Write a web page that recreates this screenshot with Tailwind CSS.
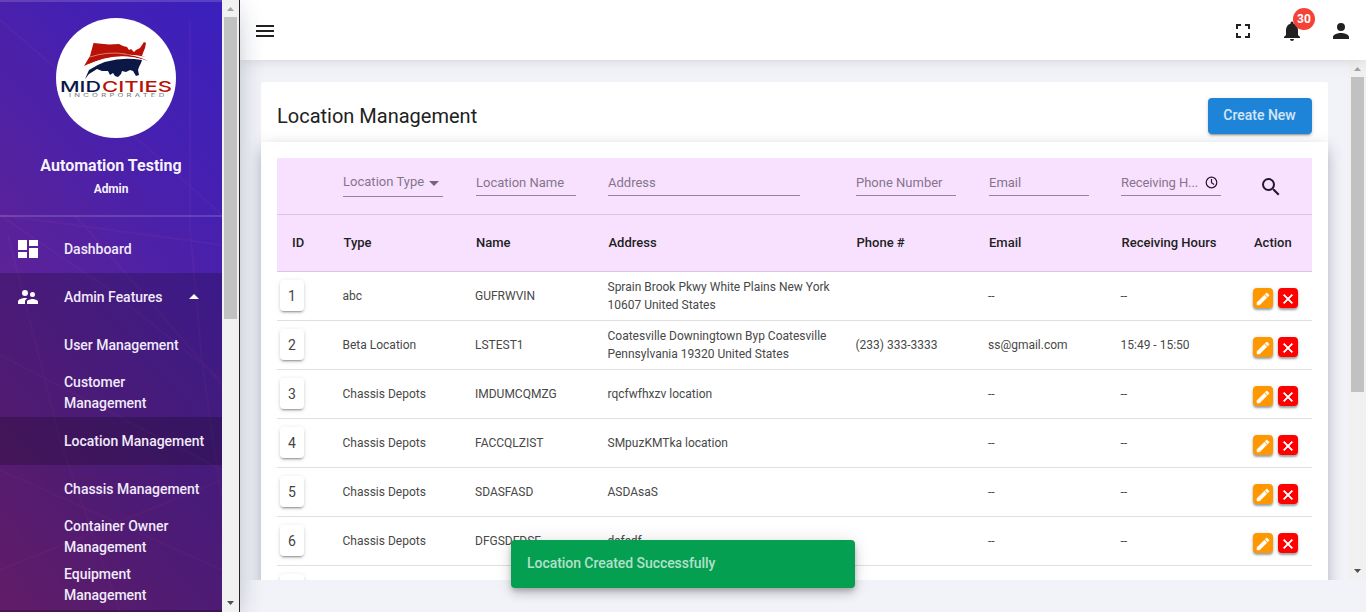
<!DOCTYPE html>
<html lang="en">
<head>
<meta charset="utf-8">
<title>Location Management</title>
<script src="https://cdn.jsdelivr.net/npm/@tailwindcss/browser@4"></script>
</head>
<body class="w-[1366px] h-[612px] overflow-hidden font-['Roboto',sans-serif] bg-[#f2f3f8] text-[#212121]">
<svg class="hidden">
  <symbol id="pencil" viewBox="0 0 24 24"><path stroke="#fff" stroke-width=".8" d="M3 17.25V21h3.750L17.810 9.940l-3.750-3.750L3 17.250zM20.710 7.040a1 1 0 0 0 0-1.410l-2.340-2.340a1 1 0 0 0-1.410 0l-1.830 1.830 3.750 3.750 1.830-1.830z"/></symbol>
  <symbol id="close" viewBox="0 0 24 24"><path stroke="#fff" stroke-width="1" d="M19 6.410 17.590 5 12 10.590 6.410 5 5 6.410 10.590 12 5 17.590 6.410 19 12 13.410 17.590 19 19 17.590 13.410 12z"/></symbol>
</svg>
<div class="flex h-full">
  <aside class="relative z-20 flex w-[240px] shrink-0 shadow-[0_10px_30px_-12px_rgba(0,0,0,.3),0_4px_25px_0_rgba(40,60,120,.12)]">
    <div class="relative w-[222px] h-full overflow-hidden bg-[linear-gradient(50deg,#7b2482_0%,#65228f_25%,#54229f_52%,#4620b0_75%,#3a20bd_100%)] text-[#f0eafa]">
      <svg class="absolute inset-0" width="222" height="612" fill="none" stroke="#d060b0" stroke-opacity=".07" stroke-width="2"><path d="M0 215 222 245M0 20 150 150 222 215M8 235 60 440 120 612M190 20V230L203 370 222 500M0 355 222 470M75 215 222 385M0 470 222 570M0 570 222 480M0 215 110 290 222 380"/></svg>
      <div class="relative flex flex-col h-[217px] items-center border-y-2 border-white/15">
        <div class="mt-4 ml-[10px] size-[120px] shrink-0 rounded-full bg-white overflow-hidden">
          <svg width="120" height="120" viewBox="0 0 120 120">
            <path fill="#b91007" d="M37.500 25 53 26.500 63 26 67 28 71 29 73 32 75 31 78 34 80 32 84 30 86 27 88 24 90 25 89 30 87 35 86 38 90 39Q60 31 28 48L34 38z"/>
            <path fill="none" stroke="#e5a79f" stroke-width=".7" d="M34 39Q52 33 70 36"/>
            <path fill="#b91007" d="M38 40Q70 31 92 43Q64 33 32 46z"/>
            <path fill="#fff" d="M29 49Q58 31 92 43Q60 36 29 56z"/>
            <path fill="#0b1745" d="M29 61 33 52Q55 37 86 42L85 45 83 49 82 52 83 57 80 58 77 53 74 52 70 54 66 53 65 56 62 59 59 58 57 55 54 57 52 53 46 53 41 51 33 56z"/>
            <text x="4" y="74" font-family="Inter,sans-serif" font-size="15" font-weight="500" textLength="41" lengthAdjust="spacingAndGlyphs" fill="#0b1745">MID</text>
            <text x="46" y="74" font-family="Inter,sans-serif" font-size="15" font-weight="500" textLength="70" lengthAdjust="spacingAndGlyphs" fill="#b91007">CITIES</text>
            <text transform="translate(13 79) scale(1.7 1)" y="0" font-family="Inter,sans-serif" font-size="4.500" textLength="56" fill="#777">INCORPORATED</text>
          </svg>
        </div>
        <div class="mt-[16px] text-[16px] leading-[24px] font-bold text-white/95">Automation Testing</div>
        <div class="mt-[3px] text-[12px] leading-[16px] font-bold tracking-[-.1px] text-white/95">Admin</div>
      </div>
      <nav class="relative text-[14px] leading-[21px] font-medium tracking-[-.02px]">
        <div class="mt-2 flex h-12 items-center pl-4">
          <svg class="w-6 shrink-0 h-6 fill-white" viewBox="0 0 24 24"><path d="M2 13h9V3H2zm0 8h9v-6H2zm11 0h9V11h-9zm0-18v6h9V3z"/></svg>
          <span class="ml-6">Dashboard</span>
        </div>
        <div class="h-[337px] bg-black/20 pb-px">
          <div class="flex h-12 items-center pl-4">
            <svg class="w-6 shrink-0 h-6 fill-white" viewBox="0 0 24 24"><path d="M16.500 12A2.500 2.500 0 1 0 14 9.500a2.490 2.490 0 0 0 2.500 2.500zM9 11a3 3 0 1 0-3-3 2.990 2.990 0 0 0 3 3zm7.500 3c-1.830 0-5.500.92-5.500 2.750V19h11v-2.250c0-1.830-3.670-2.750-5.500-2.750zM9 13c-2.330 0-7 1.170-7 3.500V19h7v-2.250c0-.85.33-2.340 2.370-3.470C10.500 13.100 9.660 13 9 13z"/></svg>
            <span class="ml-6 w-[118px]">Admin Features</span>
            <svg class="size-6 fill-white" viewBox="0 0 24 24"><path d="m7 14 5-5 5 5z"/></svg>
          </div>
          <div class="flex h-12 items-center pl-16">User Management</div>
          <div class="flex h-12 items-center pl-16">Customer<br>Management</div>
          <div class="flex h-12 items-center bg-black/20 pl-16">Location Management</div>
          <div class="flex h-12 items-center pl-16">Chassis Management</div>
          <div class="flex h-12 items-center pl-16">Container Owner<br>Management</div>
          <div class="flex h-12 items-center pl-16">Equipment<br>Management</div>
        </div>
        <div class="h-2 bg-black/40"></div>
      </nav>
    </div>
    <div class="flex w-[17px] flex-col items-center bg-[#f1f1f1]">
      <svg class="h-[17px] w-[17px] shrink-0" viewBox="0 0 17 17"><path fill="#a3a3a3" d="M5 11h7L8.500 7z"/></svg>
      <div class="h-[302px] w-[13px] bg-[#c1c1c1]"></div>
      <svg class="mt-auto h-[17px] w-[17px]" viewBox="0 0 17 17"><path fill="#505050" d="M5 6h7l-3.500 4z"/></svg>
    </div>
    <div class="w-px bg-[#2a211f]"></div>
  </aside>
  <main class="flex min-w-0 flex-1 flex-col">
    <header class="relative z-10 flex h-[60px] shrink-0 items-center bg-white pl-[13px] shadow-[0_3px_20px_rgba(0,0,0,.06),0_2px_8px_rgba(0,0,0,.05)]">
      <svg class="mt-[2px] size-6" viewBox="0 0 24 24"><path fill="#212121" d="M3 18h18v-2H3zm0-5h18v-2H3zm0-7v2h18V6z"/></svg>
      <svg class="mt-[2px] ml-auto size-6" viewBox="0 0 24 24"><path fill="#212121" d="M7 14H5v5h5v-2H7zm-2-4h2V7h3V5H5zm12 7h-3v2h5v-5h-2zM14 5v2h3v3h2V5z"/></svg>
      <div class="relative ml-[25px] mt-[2px] size-6">
        <svg class="size-6" viewBox="0 0 24 24"><path fill="#212121" d="M12 22c1.100 0 2-.9 2-2h-4a2 2 0 0 0 2 2zm6-6v-5c0-3.070-1.640-5.640-4.500-6.320V4a1.500 1.500 0 0 0-3 0v.68C7.630 5.360 6 7.920 6 11v5l-2 2v1h16v-1z"/></svg>
        <div class="absolute -top-[11px] left-[13px] flex size-[22px] items-center justify-center rounded-full bg-[#f44336] text-[12px] font-bold leading-none text-white">30</div>
      </div>
      <svg class="mt-[2px] mr-[13px] ml-[25px] size-6" viewBox="0 0 24 24"><path fill="#212121" d="M12 12a4 4 0 1 0-4-4 4 4 0 0 0 4 4zm0 2c-2.670 0-8 1.340-8 4v2h16v-2c0-2.660-5.330-4-8-4z"/></svg>
    </header>
    <div class="flex h-[520px] overflow-hidden">
      <div class="flex-1 overflow-hidden pl-[21px] pt-[22px]">
        <section class="h-[700px] w-[1067px] rounded-t-[2px] bg-white">
          <div class="flex h-[60px] items-start justify-between pt-4 pr-4 pl-4">
            <h1 class="text-[20px] leading-9">Location Management</h1>
            <button class="h-9 w-[104px] rounded bg-[#1e84d8] pr-px pb-px text-[14px] font-medium text-white/80 shadow-[0_3px_1px_-2px_rgba(0,0,0,.2),0_2px_2px_rgba(0,0,0,.14),0_1px_5px_rgba(0,0,0,.12)]">Create New</button>
          </div>
          <div class="h-[640px] bg-white px-4 pt-4 shadow-[0_5px_15px_-2px_rgba(50,60,85,.45)]">
            <div class="bg-[#f8e1ff]">
              <div class="grid h-[57px] grid-cols-[66px_132.500px_132.500px_248px_132.500px_132.500px_132.500px_1fr] border-b border-[#dbc6e1] text-[13px] leading-[18px] text-[#85758a]">
                <div></div>
                <div><div class="flex h-[39px] w-[100px] items-end border-b border-[#95839a] pb-[5px] tracking-[.02px]">Location Type<svg class="ml-[5px] mb-[5px] h-[5px] w-[10px]" viewBox="0 0 10 5"><path fill="#756579" d="M0 0h10L5 5z"/></svg></div></div>
                <div><div class="ml-[.5px] flex h-[38px] w-[100px] items-end border-b border-[#95839a] pb-[3px]">Location Name</div></div>
                <div><div class="flex h-[38px] w-[192px] items-end border-b border-[#95839a] pb-[3px]">Address</div></div>
                <div><div class="flex h-[38px] w-[100px] items-end border-b border-[#95839a] pb-[3px]">Phone Number</div></div>
                <div><div class="ml-[.5px] flex h-[38px] w-[100px] items-end border-b border-[#95839a] pb-[3px]">Email</div></div>
                <div><div class="flex h-[38px] w-[100px] items-end border-b border-[#95839a] pb-[3px] whitespace-nowrap tracking-[-.1px]">Receiving H...<svg class="mb-[3px] ml-auto mr-[3px] size-[13px]" viewBox="0 0 13 13" fill="none" stroke="#24182a" stroke-width="1.200"><circle cx="6.500" cy="6.500" r="5.300"/><path d="M6.500 3v3.700l2.600 1.700"/></svg></div></div>
                <div><svg class="ml-[5px] mt-[17px] size-6" viewBox="0 0 24 24"><path fill="#21182a" d="M15.500 14h-.79l-.28-.27A6.470 6.470 0 0 0 16 9.500 6.500 6.500 0 1 0 9.500 16c1.610 0 3.090-.59 4.230-1.570l.27.28v.79l5 4.990L20.490 19zm-6 0A4.500 4.500 0 1 1 14 9.500 4.490 4.490 0 0 1 9.500 14z"/></svg></div>
              </div>
              <div class="grid h-[57px] grid-cols-[66px_132.500px_132.500px_248px_132.500px_132.500px_132.500px_1fr] items-center border-b border-[#dbc6e1] text-[13px] font-medium">
                <div class="pl-[15px]">ID</div><div class="pl-[.5px]">Type</div><div class="pl-[.5px]">Name</div><div class="pl-[.5px]">Address</div><div class="pl-[.5px]">Phone #</div><div class="pl-[.5px]">Email</div><div class="pl-[.5px]">Receiving Hours</div><div class="pl-[.5px]">Action</div>
              </div>
            </div>
            <div id="rows"></div>
          </div>
        </section>
      </div>
      <div class="flex w-[17px] flex-col items-center bg-[#f1f1f1]">
        <svg class="h-[17px] w-[17px] shrink-0" viewBox="0 0 17 17"><path fill="#a3a3a3" d="M5 11h7L8.500 7z"/></svg>
        <div class="h-[315px] w-[13px] bg-[#c1c1c1]"></div>
        <svg class="mt-auto h-[17px] w-[17px]" viewBox="0 0 17 17"><path fill="#505050" d="M5 6h7l-3.500 4z"/></svg>
      </div>
    </div>
  </main>
</div>
<div class="absolute top-[540px] left-[511px] z-30 flex h-12 w-[344px] items-center rounded bg-[#049f51] px-4 pb-[2px] text-[14px] font-medium tracking-[-.05px] text-white/70 shadow-[0_3px_5px_-1px_rgba(0,0,0,.2),0_6px_10px_rgba(0,0,0,.14),0_1px_18px_rgba(0,0,0,.12)]">Location Created Successfully</div>
<script>
const data = [
  ['abc','GUFRWVIN','Sprain Brook Pkwy White Plains New York<br>10607 United States','','--','--'],
  ['Beta Location','LSTEST1','Coatesville Downingtown Byp Coatesville<br>Pennsylvania 19320 United States','(233) 333-3333','ss@gmail.com','15:49 - 15:50'],
  ['Chassis Depots','IMDUMCQMZG','rqcfwfhxzv location','','--','--'],
  ['Chassis Depots','FACCQLZIST','SMpuzKMTka location','','--','--'],
  ['Chassis Depots','SDASFASD','ASDAsaS','','--','--'],
  ['Chassis Depots','DFGSDFDSF','dsfsdf','','--','--'],
  ['','','','','','']
];
document.getElementById('rows').innerHTML = data.map((r, i) => `
<div class="grid h-[49px] grid-cols-[66px_132.500px_132.500px_248px_132.500px_132.500px_132.500px_1fr] items-center border-b border-[#e0e0e0] text-[12px] leading-[18px] tracking-[0px] text-[#484848]">
  <div class="-mt-px ml-[3px] flex h-[31px] w-6 items-center justify-center rounded bg-white text-[14px] font-normal tracking-normal text-[#444] shadow-[0_3px_1px_-2px_rgba(0,0,0,.2),0_2px_2px_rgba(0,0,0,.14),0_1px_5px_rgba(0,0,0,.12)]">${i < 6 ? i + 1 : ''}</div>
  ${r.map(c => `<div class="-ml-[.5px] whitespace-nowrap">${c}</div>`).join('')}
  <div class="-ml-px flex gap-[5px] pt-[4px]">
    <div class="flex size-5 items-center justify-center rounded bg-[#ff9800] shadow-[0_2px_2px_rgba(0,0,0,.3),0_1px_4px_rgba(0,0,0,.15)]"><svg class="mt-[2px] size-[16px] fill-white"><use href="#pencil"/></svg></div>
    <div class="flex size-5 items-center justify-center rounded bg-[#ff0000] shadow-[0_2px_2px_rgba(0,0,0,.3),0_1px_4px_rgba(0,0,0,.15)]"><svg class="mt-[2px] size-[16px] fill-white"><use href="#close"/></svg></div>
  </div>
</div>`).join('');
</script>
</body>
</html>
